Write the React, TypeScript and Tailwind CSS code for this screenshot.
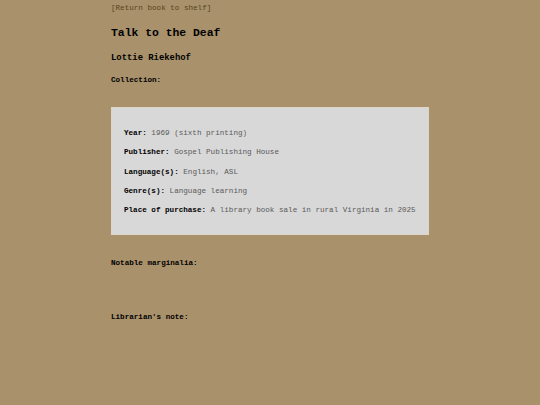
import React from "react";

const rows: [string, string][] = [
  ["Year", "1969 (sixth printing)"],
  ["Publisher", "Gospel Publishing House"],
  ["Language(s)", "English, ASL"],
  ["Genre(s)", "Language learning"],
  ["Place of purchase", "A library book sale in rural Virginia in 2025"],
];

export default function App() {
  return (
    <div
      className="min-h-[405px] w-full bg-[#a8916b] text-black"
      style={{ fontFamily: '"Liberation Mono", "Courier New", monospace' }}
    >
      <div className="mx-auto w-[318px] pt-[4px]">
        <a className="block text-[7.6px] leading-[9px] text-[#5a4520]">[Return book to shelf]</a>
        <h1 className="mt-[13px] text-[11.4px] leading-[14px] font-bold">Talk to the Deaf</h1>
        <h2 className="mt-[13px] text-[8.9px] leading-[11px] font-bold">Lottie Riekehof</h2>
        <div className="mt-[12px] text-[7.6px] leading-[9px] font-bold">Collection:</div>
        <div className="mt-[22px] h-[128px] bg-[#d8d8d8] border border-[#ddd6c8] px-[12px] pt-[21px]">
          <div className="flex flex-col gap-[10.25px]">
            {rows.map(([k, v]) => (
              <div key={k} className="text-[7.6px] leading-[9px] whitespace-nowrap">
                <span className="font-bold">{k}:</span>{" "}
                <span className="text-[#5a5a5a]">{v}</span>
              </div>
            ))}
          </div>
        </div>
        <div className="mt-[24px] text-[7.6px] leading-[9px] font-bold">Notable marginalia:</div>
        <div className="mt-[45px] text-[7.6px] leading-[9px] font-bold">Librarian's note:</div>
      </div>
    </div>
  );
}
